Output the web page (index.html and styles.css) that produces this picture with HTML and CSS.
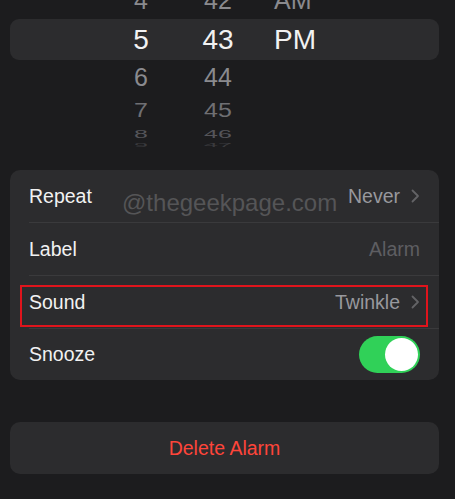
FILE: index.html
```html
<!DOCTYPE html>
<html>
<head>
<meta charset="utf-8">
<link rel="stylesheet" href="styles.css">
</head>
<body>
<div class="screen">
  <div class="picker">
    <div class="prow r4"><span class="h">4</span><span class="m">42</span><span class="ap">AM</span></div>
    <div class="prow sel"><span class="h">5</span><span class="m">43</span><span class="ap">PM</span></div>
    <div class="prow r6"><span class="h">6</span><span class="m">44</span><span class="ap"></span></div>
    <div class="prow r7"><span class="h">7</span><span class="m">45</span><span class="ap"></span></div>
    <div class="prow r8"><span class="h">8</span><span class="m">46</span><span class="ap"></span></div>
    <div class="prow r9"><span class="h">9</span><span class="m">47</span><span class="ap"></span></div>
  </div>

  <div class="card">
    <div class="watermark">@thegeekpage.com</div>
    <div class="row">
      <span class="label">Repeat</span>
      <span class="value">Never</span>
      <svg class="chev" width="9" height="14" viewBox="0 0 9 14"><path d="M1.5 1.5 L7 7 L1.5 12.5" fill="none" stroke="#636366" stroke-width="1.8" stroke-linecap="round" stroke-linejoin="round"/></svg>
    </div>
    <div class="row">
      <span class="label">Label</span>
      <span class="value placeholder">Alarm</span>
    </div>
    <div class="row sound">
      <span class="label">Sound</span>
      <span class="value">Twinkle</span>
      <svg class="chev" width="9" height="14" viewBox="0 0 9 14"><path d="M1.5 1.5 L7 7 L1.5 12.5" fill="none" stroke="#636366" stroke-width="1.8" stroke-linecap="round" stroke-linejoin="round"/></svg>
      <div class="highlight"></div>
    </div>
    <div class="row last">
      <span class="label">Snooze</span>
      <span class="toggle"><span class="knob"></span></span>
    </div>
  </div>

  <div class="delete">Delete Alarm</div>
</div>
</body>
</html>
```

FILE: styles.css
```css
html, body {
  margin: 0;
  padding: 0;
  background: #1c1c1e;
  font-family: "Liberation Sans", Arial, sans-serif;
  overflow: hidden;
}

.screen {
  width: 455px;
  height: 499px;
  padding: 0 16px 0 10px;
  box-sizing: border-box;
}

.picker {
  margin-top: -18px;
  height: 188px;
  display: flex;
  flex-direction: column;
  overflow: hidden;
}

.prow {
  display: flex;
  align-items: center;
  padding-left: 106px;
  flex-shrink: 0;
}

.prow span {
  display: block;
  line-height: 1;
}

.prow .h {
  width: 50px;
  text-align: center;
}

.prow .m {
  width: 50px;
  margin-left: 27px;
  text-align: center;
}

.prow .ap {
  margin-left: 31px;
}

.r4 {
  height: 37px;
  font-size: 25px;
  color: #8a8a8e;
}

.sel {
  height: 41px;
  background: #2c2c2e;
  border-radius: 9px;
  font-size: 28px;
  color: #f2f2f2;
}

.r6 {
  height: 35px;
  font-size: 25px;
  color: #8a8a8e;
}

.r7 {
  height: 30px;
  font-size: 25px;
  color: #6f6f73;
}

.r7 span { transform: scaleY(0.82); }

.r8 {
  height: 18px;
  font-size: 25px;
  color: #55555a;
}

.r8 span { transform: scaleY(0.45); }

.r9 {
  height: 8px;
  font-size: 25px;
  color: #3a3a3d;
  overflow: hidden;
  align-items: flex-start;
}

.r9 span { transform: scaleY(0.2); transform-origin: top; }

.card {
  position: relative;
  background: #2c2c2e;
  border-radius: 10px;
  padding-left: 19px;
  overflow: hidden;
}

.row {
  position: relative;
  display: flex;
  align-items: center;
  height: 52px;
  padding-right: 19px;
  border-bottom: 1px solid #3a3a3c;
}

.row.last {
  border-bottom: none;
  height: 51px;
}

.label {
  font-size: 19.5px;
  color: #f2f2f2;
  flex: 1;
}

.value {
  font-size: 19.5px;
  color: #98989d;
}

.value.placeholder {
  color: #5e5e62;
}

.chev {
  margin-left: 11px;
  display: block;
}

.highlight {
  position: absolute;
  left: -9px;
  right: 11px;
  top: 9px;
  bottom: 1px;
  border: 2px solid #e0141c;
}

.watermark {
  position: absolute;
  left: 112px;
  top: 19px;
  font-size: 24px;
  color: #555557;
  pointer-events: none;
}

.toggle {
  position: relative;
  width: 61px;
  height: 37px;
  border-radius: 19px;
  background: #30d158;
  display: block;
}

.knob {
  position: absolute;
  right: 2px;
  top: 2px;
  width: 33px;
  height: 33px;
  border-radius: 50%;
  background: #ffffff;
}

.delete {
  margin-top: 42px;
  height: 52px;
  background: #2c2c2e;
  border-radius: 10px;
  display: flex;
  align-items: center;
  justify-content: center;
  font-size: 19.5px;
  color: #ff453a;
}
```
